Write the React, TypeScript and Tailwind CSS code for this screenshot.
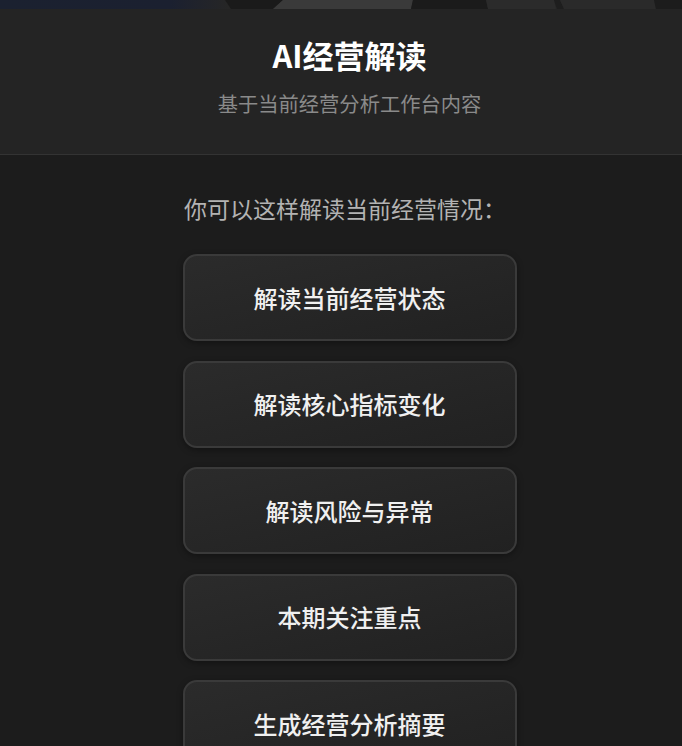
import React from "react";

const items = [
  "解读当前经营状态",
  "解读核心指标变化",
  "解读风险与异常",
  "本期关注重点",
  "生成经营分析摘要",
];

function Backdrop() {
  return (
    <svg width="682" height="9" viewBox="0 0 682 9" preserveAspectRatio="none" className="block shrink-0">
      <defs>
        <linearGradient id="nav" x1="0" x2="1" y1="0" y2="0">
          <stop offset="0" stopColor="#1b2130" />
          <stop offset="0.75" stopColor="#1b2030" />
          <stop offset="1" stopColor="#262626" />
        </linearGradient>
      </defs>
      <rect x="0" y="0" width="682" height="9" fill="#262626" />
      <rect x="0" y="0" width="228" height="9" fill="url(#nav)" />
      <polygon points="225,0 283,0 273,9 231,9" fill="#1a1a1a" />
      <polygon points="283,0 413,0 411,9 273,9" fill="#3a3a3a" />
      <polygon points="413,0 486,0 488,9 411,9" fill="#1b1b1b" />
      <polygon points="486,0 554,0 556,9 488,9" fill="#2b2b2b" />
      <polygon points="554,0 560,0 564,9 557,9" fill="#1e1e1e" />
      <polygon points="560,0 654,0 656,9 564,9" fill="#2a2a2a" />
      <polygon points="654,0 682,0 682,9 656,9" fill="#1c1c1c" />
    </svg>
  );
}

export default function App() {
  return (
    <div
      className="w-[682px] h-[746px] overflow-hidden bg-[#1c1c1c] flex flex-col"
      style={{ fontFamily: '"Noto Sans CJK SC", "Noto Sans", sans-serif' }}
    >
      <Backdrop />
      <div className="shrink-0 bg-[#242424] border-b border-[#333333] h-[146px] flex flex-col items-center pl-[17px]">
        <div className="mt-[28px] h-[36px] leading-[36px] text-[31px] font-bold text-white">AI经营解读</div>
        <div className="mt-[17px] h-[26px] leading-[26px] text-[20.3px] text-[#8a8a8a]">基于当前经营分析工作台内容</div>
      </div>
      <div className="shrink-0 flex flex-col items-center pl-[17px]">
        <div className="mt-[37px] mr-[9px] h-[32px] leading-[32px] text-[23px] text-[#b3b3b3]">你可以这样解读当前经营情况：</div>
        <div className="mt-[30px] flex flex-col gap-[19.5px]">
          {items.map((t) => (
            <div
              key={t}
              className="shrink-0 w-[334px] h-[87px] rounded-[14px] border-2 border-[#3a3a3a] bg-gradient-to-br from-[#2b2b2b] to-[#212121] flex items-center justify-center text-[24px] font-medium text-[#f0f0f0] shadow-[0_2px_6px_rgba(0,0,0,0.35)]"
            >
              {t}
            </div>
          ))}
        </div>
      </div>
    </div>
  );
}
